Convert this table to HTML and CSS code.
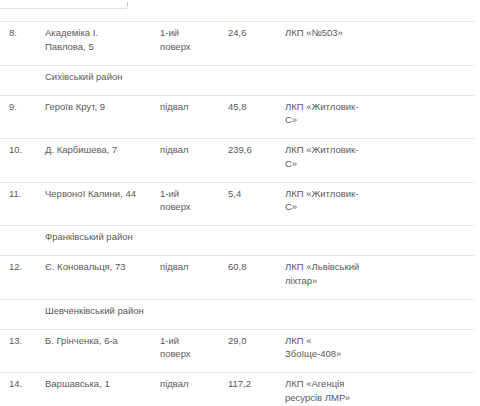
FILE: index.html
```html
<!DOCTYPE html>
<html lang="uk">
<head>
<meta charset="utf-8">
<link rel="stylesheet" href="styles.css">
</head>
<body>
<div class="top"><div class="topline"></div><div class="tick"></div></div>
<table class="list">
  <colgroup>
    <col class="c-num"><col class="c-addr"><col class="c-floor"><col class="c-area"><col class="c-org"><col class="c-rest">
  </colgroup>
  <tr><td>8.</td><td>Академіка І. Павлова, 5</td><td>1-ий поверх</td><td>24,6</td><td>ЛКП «№503»</td><td></td></tr>
  <tr class="district"><td></td><td colspan="5">Сихівський район</td></tr>
  <tr><td>9.</td><td>Героїв Крут, 9</td><td>підвал</td><td>45,8</td><td>ЛКП «Житловик-С»</td><td></td></tr>
  <tr><td>10.</td><td>Д. Карбишева, 7</td><td>підвал</td><td>239,6</td><td>ЛКП «Житловик-С»</td><td></td></tr>
  <tr><td>11.</td><td>Червоної Калини, 44</td><td>1-ий поверх</td><td>5,4</td><td>ЛКП «Житловик-С»</td><td></td></tr>
  <tr class="district"><td></td><td colspan="5">Франківський район</td></tr>
  <tr><td>12.</td><td>Є. Коновальця, 73</td><td>підвал</td><td>60,8</td><td>ЛКП «Львівський ліхтар»</td><td></td></tr>
  <tr class="district"><td></td><td colspan="5">Шевченківський район</td></tr>
  <tr><td>13.</td><td>Б. Грінченка, 6-а</td><td>1-ий поверх</td><td>29,0</td><td>ЛКП « Збоїще-408»</td><td></td></tr>
  <tr><td>14.</td><td>Варшавська, 1</td><td>підвал</td><td>117,2</td><td>ЛКП «Агенція ресурсів ЛМР»</td><td></td></tr>
</table>
</body>
</html>
```
FILE: styles.css
```css
html, body {
  margin: 0;
  padding: 0;
  background: #ffffff;
}
body {
  font-family: "Liberation Sans", Arial, sans-serif;
  font-size: 9.5px;
  color: #595959;
  overflow: hidden;
}
.top {
  display: flex;
  align-items: flex-start;
  height: 9px;
}
.topline {
  width: 127px;
  height: 8px;
  border-bottom: 1px solid #e4e4e4;
}
.tick {
  width: 1px;
  height: 5px;
  margin-top: 2px;
  background: #c4c4c4;
}
.list {
  margin-top: 12px;
  width: 475px;
  table-layout: fixed;
  border-collapse: separate;
  border-spacing: 0;
}
.c-num { width: 45px; }
.c-addr { width: 115px; }
.c-floor { width: 68px; }
.c-area { width: 57px; }
.c-org { width: 88px; }
.list td {
  border-top: 1px solid #e6e6e6;
  padding: 4px 0 11.5px 0;
  line-height: 13.5px;
  vertical-align: top;
}
.list td:nth-child(1) { padding-left: 9px; }
.list td:nth-child(2) { padding-right: 21px; }
.list td:nth-child(3) { padding-right: 20px; }
.list td:nth-child(5) { padding-right: 8px; }
.list .district td:nth-child(2) { padding-right: 0; }
```
